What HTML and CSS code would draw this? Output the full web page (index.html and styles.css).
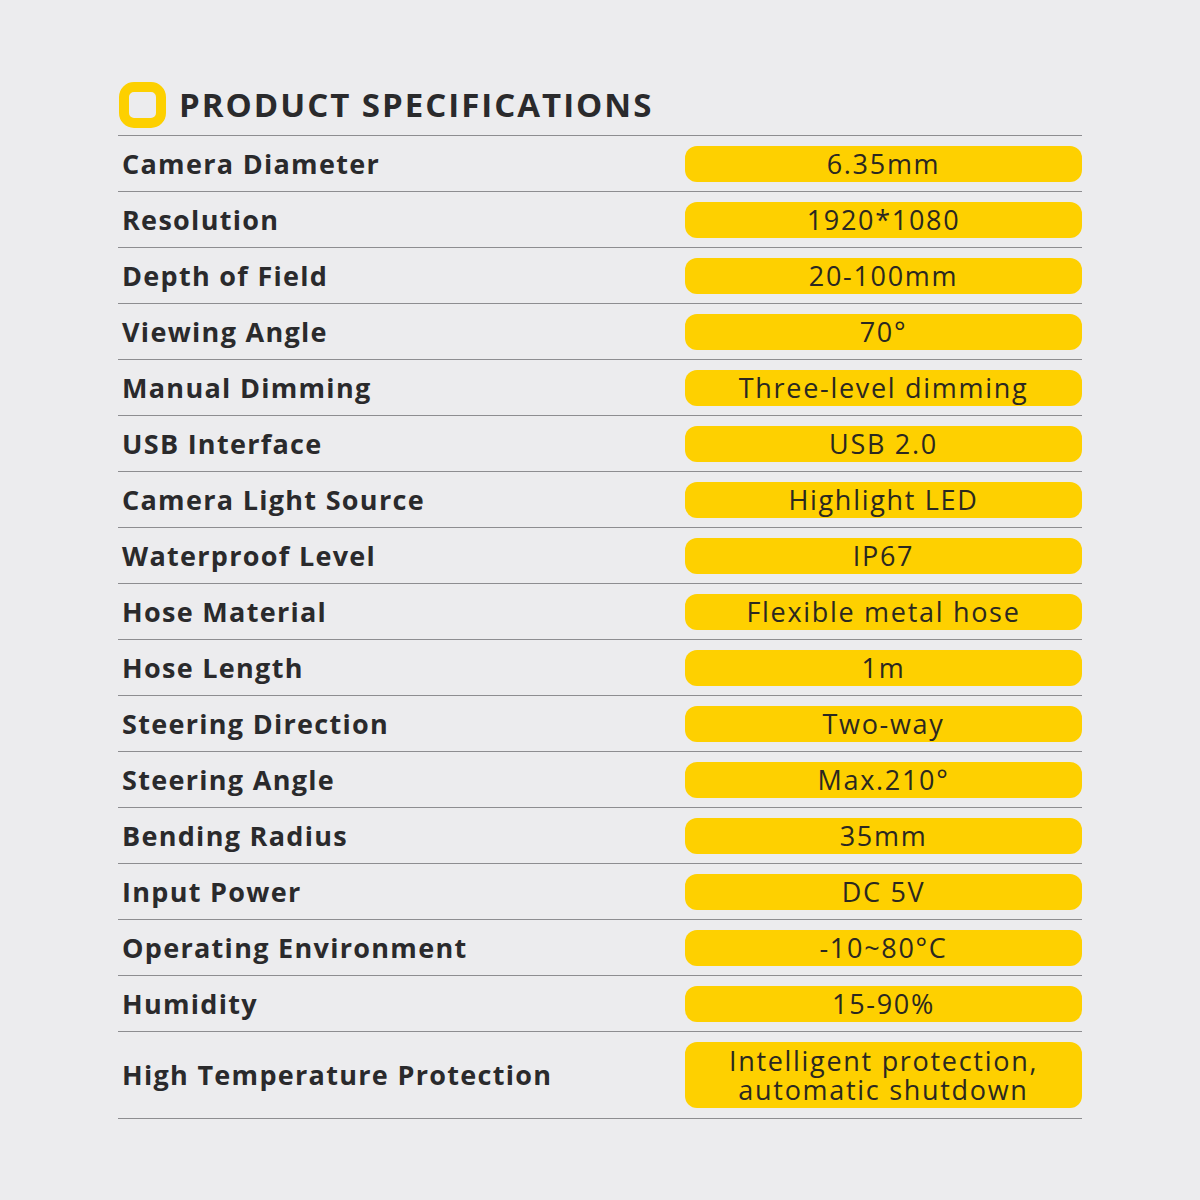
FILE: index.html
```html
<!DOCTYPE html>
<html>
<head>
<meta charset="utf-8">
<link rel="stylesheet" href="styles.css">
</head>
<body>
<div class="page">
  <div class="header">
    <div class="logo"></div>
    <h1 class="title">PRODUCT SPECIFICATIONS</h1>
  </div>
  <div class="table">
    <div class="row"><div class="label">Camera Diameter</div><div class="pill">6.35mm</div></div>
    <div class="row"><div class="label">Resolution</div><div class="pill">1920*1080</div></div>
    <div class="row"><div class="label">Depth of Field</div><div class="pill">20-100mm</div></div>
    <div class="row"><div class="label">Viewing Angle</div><div class="pill">70°</div></div>
    <div class="row"><div class="label">Manual Dimming</div><div class="pill">Three-level dimming</div></div>
    <div class="row"><div class="label">USB Interface</div><div class="pill">USB 2.0</div></div>
    <div class="row"><div class="label">Camera Light Source</div><div class="pill">Highlight LED</div></div>
    <div class="row"><div class="label">Waterproof Level</div><div class="pill">IP67</div></div>
    <div class="row"><div class="label">Hose Material</div><div class="pill">Flexible metal hose</div></div>
    <div class="row"><div class="label">Hose Length</div><div class="pill">1m</div></div>
    <div class="row"><div class="label">Steering Direction</div><div class="pill">Two-way</div></div>
    <div class="row"><div class="label">Steering Angle</div><div class="pill">Max.210°</div></div>
    <div class="row"><div class="label">Bending Radius</div><div class="pill">35mm</div></div>
    <div class="row"><div class="label">Input Power</div><div class="pill">DC 5V</div></div>
    <div class="row"><div class="label">Operating Environment</div><div class="pill">-10~80°C</div></div>
    <div class="row"><div class="label">Humidity</div><div class="pill">15-90%</div></div>
    <div class="row tall"><div class="label">High Temperature Protection</div><div class="pill">Intelligent protection,<br>automatic shutdown</div></div>
  </div>
</div>
</body>
</html>
```
FILE: styles.css
```css
html, body {
  margin: 0;
  padding: 0;
  background: #ececee;
}
.page {
  width: 1200px;
  height: 1200px;
  box-sizing: border-box;
  padding: 82px 118px 0 118px;
  font-family: "Open Sans", "Liberation Sans", sans-serif;
  color: #2a2a2c;
}
.header {
  display: flex;
  align-items: center;
  gap: 13px;
  height: 46px;
  padding-left: 1px;
  margin-bottom: 7px;
}
.logo {
  width: 47px;
  height: 46px;
  box-sizing: border-box;
  border: 10px solid #fdd000;
  border-radius: 15px;
  background: #ececee;
}
.title {
  margin: 0;
  font-size: 33px;
  font-weight: 700;
  letter-spacing: 2px;
  color: #2a2a2c;
  line-height: 46px;
}
.table {
  border-top: 1px solid #8d8d90;
}
.row {
  display: flex;
  align-items: center;
  justify-content: space-between;
  height: 55px;
  border-bottom: 1px solid #8d8d90;
}
.row.tall {
  height: 86px;
}
.label {
  padding-left: 4px;
  font-size: 27px;
  font-weight: 700;
  letter-spacing: 1.3px;
  line-height: 36px;
}
.pill {
  width: 397px;
  height: 36px;
  box-sizing: border-box;
  background: #fed000;
  border-radius: 12px;
  display: flex;
  align-items: center;
  justify-content: center;
  text-align: center;
  font-size: 27px;
  font-weight: 400;
  letter-spacing: 1.7px;
  line-height: 36px;
  color: #2b2820;
}
.row.tall .pill {
  height: 66px;
  line-height: 29px;
}
```
